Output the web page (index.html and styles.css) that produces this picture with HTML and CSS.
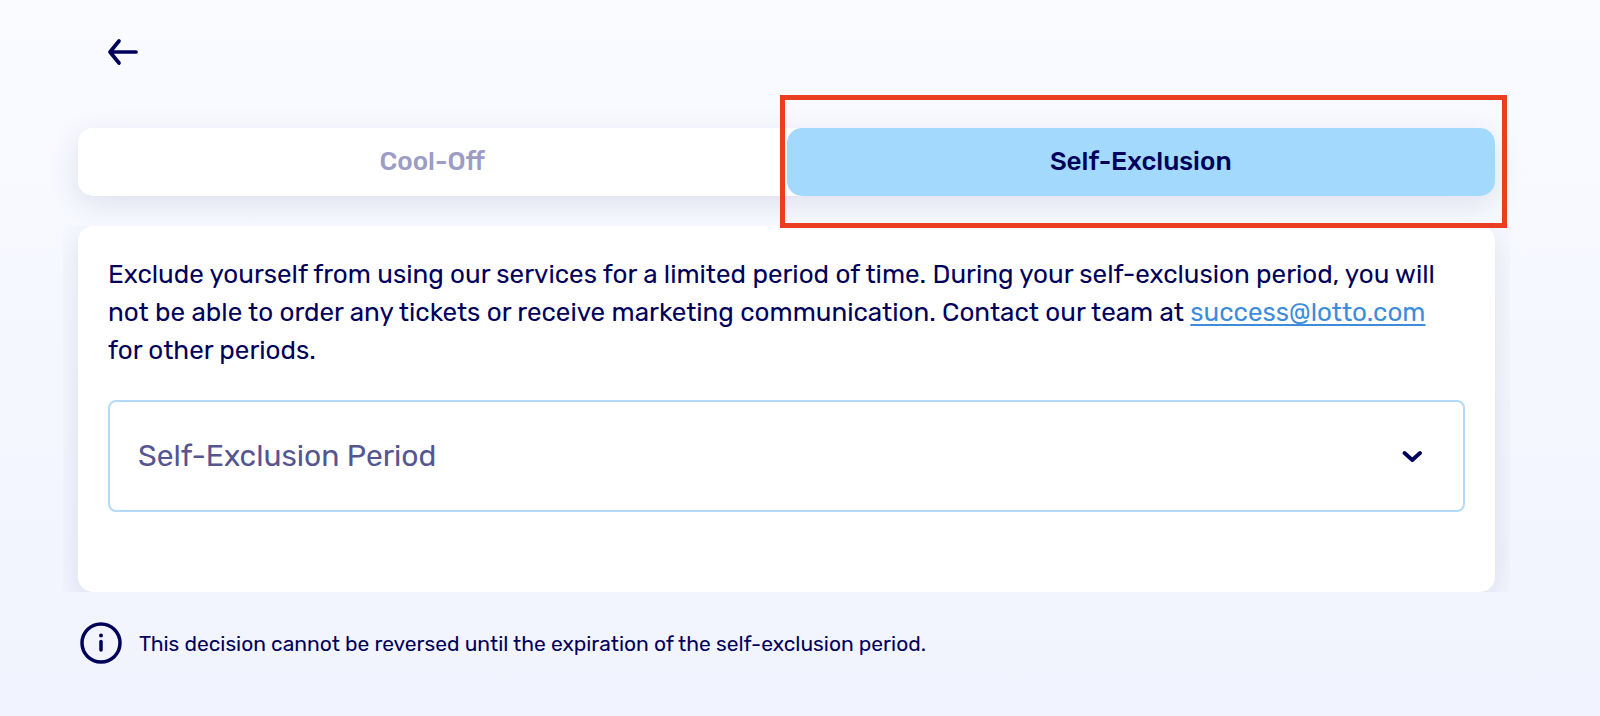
FILE: index.html
```html
<!DOCTYPE html>
<html lang="en">
<head>
    <meta charset="UTF-8">
    <meta name="viewport" content="width=device-width, initial-scale=1.0">
    <title>Self-Exclusion</title>
    <link rel="stylesheet" href="styles.css">
</head>
<body>

<main class="container">
    <button class="back-btn" type="button" aria-label="Back">
        <svg width="32" height="28" viewBox="0 0 32 28" fill="none" stroke="currentColor" stroke-width="3.700" stroke-linecap="round" stroke-linejoin="round">
            <path d="M29 14H3.500M12 3L3 14L12 25"/>
        </svg>
    </button>

    <div class="tabs">
        <button class="tab" type="button">Cool-Off</button>
        <button class="tab active" type="button">Self-Exclusion</button>
    </div>

    <section class="card">
        <p class="description">Exclude yourself from using our services for a limited period of time. During your self-exclusion period, you will not be able to order any tickets or receive marketing communication. Contact our team at <a href="mailto:success@lotto.com">success@lotto.com</a> for other periods.</p>
        <div class="select-wrap">
            <select id="period" aria-label="Self-Exclusion Period">
                <option>Self-Exclusion Period</option>
            </select>
            <svg class="chevron" width="20" height="14" viewBox="0 0 20 14" fill="none" stroke="currentColor" stroke-width="3.800" stroke-linecap="round" stroke-linejoin="round">
                <path d="M2.500 3L10.300 10L18 3"/>
            </svg>
        </div>
    </section>

    <div class="note">
        <svg width="42" height="42" viewBox="0 0 42 42" fill="none" stroke="currentColor">
            <circle cx="21" cy="21" r="19" stroke-width="3.500"/>
            <path d="M21 19.500V28" stroke-width="3.500" stroke-linecap="round"/>
            <circle cx="21" cy="13.500" r="2" fill="currentColor" stroke="none"/>
        </svg>
        <span>This decision cannot be reversed until the expiration of the self-exclusion period.</span>
    </div>
</main>

</body>
</html>
```
FILE: styles.css
```css
* {
    box-sizing: border-box;
}
body {
    margin: 0;
    min-height: 100vh;
    background: linear-gradient(#fafbff, #f3f6fe 65%, #f1f3fe);
    color: #00005a;
    font-family: Rubik, Roboto, sans-serif;
}
.container {
    padding: 38px 105px 30px 78px;
}
button {
    border: none;
    font-family: inherit;
    color: inherit;
    cursor: pointer;
}
svg {
    display: block;
    flex: none;
}
.back-btn {
    display: block;
    margin: 0 0 62px 29px;
    padding: 0;
    background: none;
}
.tabs {
    display: flex;
    margin-bottom: 30px;
    background: #fff;
    border-radius: 15px;
    box-shadow: 0 8px 30px rgba(0, 0, 90, 0.1);
}
.tab {
    flex: 1;
    height: 68px;
    padding: 0 0 2px;
    background: none;
    border-radius: 15px;
    font-size: 26px;
    font-weight: 500;
    color: #9c9cc4;
}
.tab.active {
    position: relative;
    background: #a3d9fc;
    color: #00005a;
}
/* red frame round the selected tab */
.tab.active::after {
    content: "";
    position: absolute;
    z-index: 1;
    top: -33px;
    right: -12px;
    bottom: -32px;
    left: -7px;
    border: 5px solid #e93e20;
}
.card {
    padding: 30px 30px 80px;
    background: #fff;
    border-radius: 15px;
    box-shadow: 0 8px 30px rgba(0, 0, 90, 0.1);
    clip-path: inset(0 -15px);
}
.description {
    margin: 0 0 30px;
    padding-right: 10px;
    font-size: 26px;
    line-height: 38px;
}
.description a {
    color: #3d8cdc;
    text-decoration-thickness: 2px;
    text-underline-offset: 3px;
}
.select-wrap {
    position: relative;
}
.select-wrap select {
    display: block;
    width: 100%;
    height: 112px;
    padding: 0 60px 0 28px;
    appearance: none;
    background: #fff;
    border: 2px solid #b5d9f8;
    border-radius: 8px;
    color: #555592;
    font-family: inherit;
    font-size: 30px;
}
.chevron {
    position: absolute;
    top: 50px;
    right: 43px;
    pointer-events: none;
}
.note {
    display: flex;
    align-items: center;
    gap: 17px;
    margin-top: 30px;
    padding-left: 2px;
    font-size: 21px;
}
```
